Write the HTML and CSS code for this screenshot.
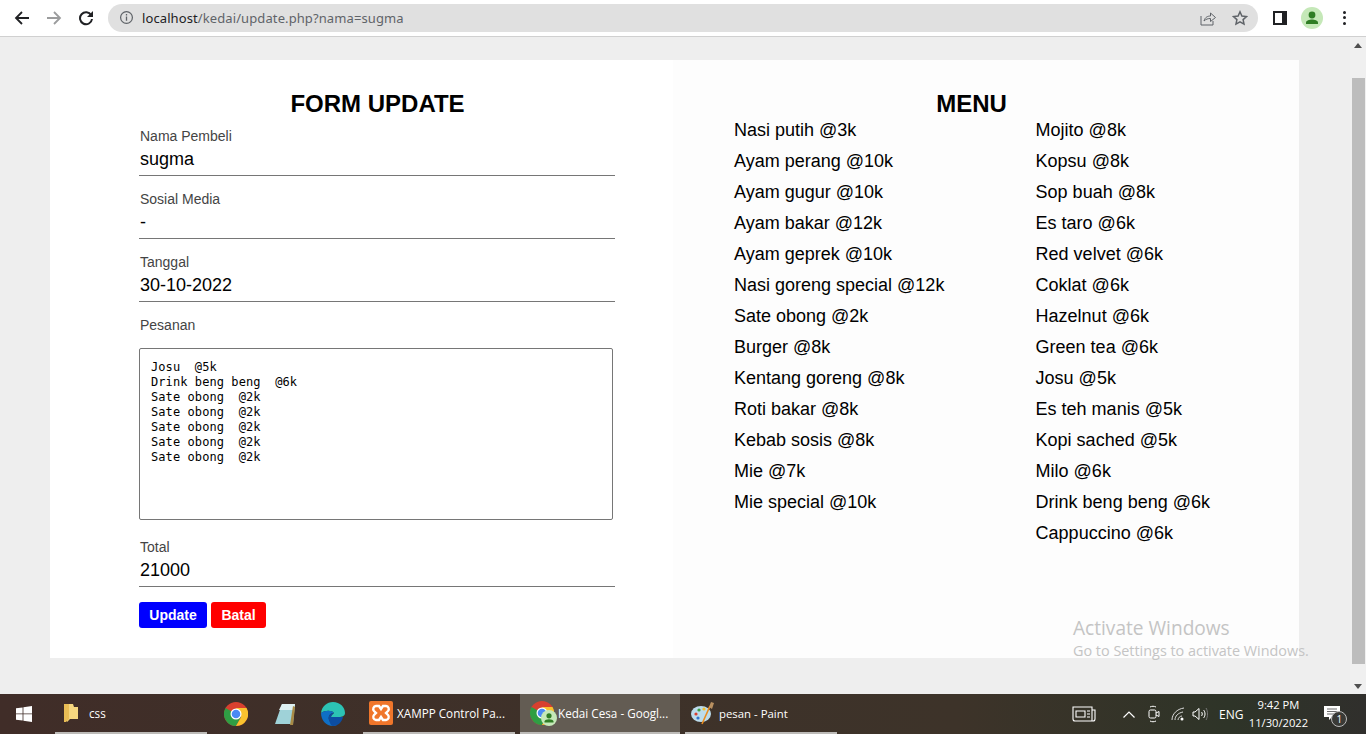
FILE: index.html
```html
<!DOCTYPE html>
<html lang="id">
<head>
<meta charset="utf-8">
<title>Kedai Cesa</title>
<link rel="stylesheet" href="styles.css">
</head>
<body>
<header class="toolbar">
  <svg class="nav-icon" viewBox="0 0 16 16"><path d="M15 8H2.500M8 2 2 8l6 6" fill="none" stroke="#202124" stroke-width="1.800"/></svg>
  <svg class="nav-icon dim" viewBox="0 0 16 16"><path d="M1 8h12.500M8 2l6 6-6 6" fill="none" stroke="#9b9c9d" stroke-width="1.800"/></svg>
  <svg class="nav-icon" viewBox="0 0 16 16"><path d="M13.200 5.200A6 6 0 1 0 14 9" fill="none" stroke="#202124" stroke-width="2"/><path d="M15 1v6H9z" fill="#202124"/></svg>
  <div class="omnibox">
    <svg class="info" viewBox="0 0 16 16"><circle cx="8" cy="8" r="6.300" fill="none" stroke="#5f6368" stroke-width="1.300"/><path d="M8 7v4.500M8 4.300v1.500" stroke="#5f6368" stroke-width="1.400"/></svg>
    <span class="url"><span class="host">localhost</span>/kedai/update.php?nama=sugma</span>
    <svg class="box-icon" viewBox="0 0 16 16"><path d="M1 6v9h12v-4" fill="none" stroke="#5f6368" stroke-width="1"/><path d="M4 11c1-4 4-5 6.500-5V3l5 4.500-5 4V8.500C8 8.500 6 9 4 11z" fill="none" stroke="#5f6368" stroke-width="1"/></svg>
    <svg class="box-icon star" viewBox="0 0 16 16"><path d="m8 1.800 1.900 4.200 4.600.5-3.400 3.100.9 4.500L8 11.800l-4 2.300.9-4.500L1.500 6.500l4.600-.5z" fill="none" stroke="#5f6368" stroke-width="1.500"/></svg>
  </div>
  <svg class="side-icon" viewBox="0 0 14 14"><rect width="14" height="14" fill="#202124"/><rect x="2" y="2" width="7" height="10" fill="#fff"/></svg>
  <div class="avatar">
    <svg viewBox="0 0 22 22"><circle cx="11" cy="8" r="3.400" fill="#2f7d24"/><path d="M5 17v-1.500c0-2 3.500-3 6-3s6 1 6 3V17z" fill="#2f7d24"/></svg>
  </div>
  <div class="dots"><i></i><i></i><i></i></div>
</header>

<div class="viewport">
  <main class="page">
    <div class="card">
      <section class="form-side">
        <form class="form">
          <h1 class="title">FORM UPDATE</h1>
          <label class="field"><span class="label">Nama Pembeli</span><input class="input" value="sugma" readonly></label>
          <label class="field"><span class="label">Sosial Media</span><input class="input" value="-" readonly></label>
          <label class="field"><span class="label">Tanggal</span><input class="input" value="30-10-2022" readonly></label>
          <label class="field area-field"><span class="label">Pesanan</span>
<textarea class="area" readonly>Josu  @5k
Drink beng beng  @6k
Sate obong  @2k
Sate obong  @2k
Sate obong  @2k
Sate obong  @2k
Sate obong  @2k</textarea></label>
          <label class="field"><span class="label">Total</span><input class="input" value="21000" readonly></label>
          <div class="actions"><button type="button" class="btn blue">Update</button><button type="button" class="btn red">Batal</button></div>
        </form>
      </section>
      <section class="menu-side">
        <h2 class="title">MENU</h2>
        <div class="menu-cols">
          <ul class="menu-list">
            <li>Nasi putih @3k</li><li>Ayam perang @10k</li><li>Ayam gugur @10k</li><li>Ayam bakar @12k</li><li>Ayam geprek @10k</li><li>Nasi goreng special @12k</li><li>Sate obong @2k</li><li>Burger @8k</li><li>Kentang goreng @8k</li><li>Roti bakar @8k</li><li>Kebab sosis @8k</li><li>Mie @7k</li><li>Mie special @10k</li>
          </ul>
          <ul class="menu-list">
            <li>Mojito @8k</li><li>Kopsu @8k</li><li>Sop buah @8k</li><li>Es taro @6k</li><li>Red velvet @6k</li><li>Coklat @6k</li><li>Hazelnut @6k</li><li>Green tea @6k</li><li>Josu @5k</li><li>Es teh manis @5k</li><li>Kopi sached @5k</li><li>Milo @6k</li><li>Drink beng beng @6k</li><li>Cappuccino @6k</li>
          </ul>
        </div>
      </section>
    </div>
  </main>
  <div class="scrollbar">
    <svg class="arrow" viewBox="0 0 8 5"><path d="M0 5 4 0l4 5z" fill="#505050"/></svg>
    <div class="thumb"></div>
    <svg class="arrow" viewBox="0 0 8 5"><path d="M0 0l4 5 4-5z" fill="#505050"/></svg>
  </div>
  <div class="watermark">
    <div class="wm-big">Activate Windows</div>
    <div class="wm-small">Go to Settings to activate Windows.</div>
  </div>
</div>

<footer class="taskbar">
  <svg class="start" viewBox="0 0 16 16"><path d="M0 2.300 6.600 1.400V7.500H0zM7.400 1.300 16 0v7.500H7.400zM0 8.300h6.600v6.200L0 13.700zM7.400 8.300H16V16l-8.600-1.200z" fill="#fff"/></svg>
  <div class="task task-css">
    <svg class="folder" viewBox="0 0 14 20"><path d="M3 1h6l1 3h4v12H6l-3 3z" fill="#f6d77f"/><path d="M0 1h5v15l-3 3H0z" fill="#e9bd55"/></svg>
    <span>css</span>
  </div>
  <div class="pinned">
    <svg class="pin" viewBox="0 0 24 24"><circle cx="12" cy="12" r="12" fill="#d8402f"/><path d="M12 12 1.600 6A12 12 0 0 0 12 24l5-9z" fill="#2f9e44"/><path d="M12 6h10.500A12 12 0 0 1 12 24l5.200-9z" fill="#f9c22e"/><circle cx="12" cy="12" r="5.500" fill="#fff"/><circle cx="12" cy="12" r="4.300" fill="#4a8af4"/></svg>
    <svg class="pin" viewBox="0 0 24 24"><path d="M9 2h13l-2 20H2z" fill="#9fd2d8"/><path d="M9 2h13l-1 6H6z" fill="#dff1f2"/><path d="M20 4l2 1-2 18-3 0z" fill="#a88a45"/></svg>
    <svg class="pin" viewBox="0 0 24 24"><path d="M0 11C1 4 6 0 12 0c7 0 12 5 12 11 0 3-3 4-6 4H10c0-2 2-3 3-4-2-3-9-3-13 0z" fill="#2cc3b4"/><path d="M0 11c4-3 11-3 13 0-4 0-6 3-5 7 1 3 4 5 8 6-1 0-3 0-4 0C5 24 0 18 0 11z" fill="#0f6fc6"/><path d="M8 18c-1-4 1-7 5-7-1 1-3 2-3 4h12c-1 5-5 9-10 9-2 0-3-3-4-6z" fill="#0c4da2"/></svg>
  </div>
  <div class="task task-xampp">
    <svg class="task-icon xampp" viewBox="0 0 24 24"><rect width="24" height="24" rx="2" fill="#f0762b"/><path d="M7 5h3l2 3 2-3h3a3 3 0 0 1 2 5l-2 2 2 2a3 3 0 0 1-2 5h-3l-2-3-2 3H7a3 3 0 0 1-2-5l2-2-2-2a3 3 0 0 1 2-5z" fill="none" stroke="#fff" stroke-width="2.400"/></svg>
    <span>XAMPP Control Pa...</span>
  </div>
  <div class="task task-active">
    <div class="chrome-wrap">
      <svg class="task-icon" viewBox="0 0 24 24"><circle cx="12" cy="12" r="12" fill="#d8402f"/><path d="M12 12 1.600 6A12 12 0 0 0 12 24l5-9z" fill="#2f9e44"/><path d="M12 6h10.500A12 12 0 0 1 12 24l5.200-9z" fill="#f9c22e"/><circle cx="12" cy="12" r="5.500" fill="#fff"/><circle cx="12" cy="12" r="4.300" fill="#4a8af4"/></svg>
      <svg class="badge" viewBox="0 0 16 16"><circle cx="8" cy="8" r="8" fill="#c5e8b8"/><circle cx="8" cy="5.800" r="2.600" fill="#2f7d24"/><path d="M3.500 12.500v-1c0-1.500 2.500-2.300 4.500-2.300s4.500.8 4.500 2.300v1z" fill="#2f7d24"/></svg>
    </div>
    <span>Kedai Cesa - Googl...</span>
  </div>
  <div class="task task-paint">
    <svg class="task-icon" viewBox="0 0 24 24"><ellipse cx="10" cy="13" rx="10" ry="8" fill="#bcdcec"/><circle cx="5" cy="13" r="1.600" fill="#d8402f"/><circle cx="8" cy="9" r="1.600" fill="#3f9e44"/><circle cx="13" cy="8" r="1.600" fill="#f5c12e"/><circle cx="7" cy="17" r="1.600" fill="#3377cc"/><path d="M11 23 19 5" stroke="#e98c1f" stroke-width="1.600"/><path d="M18 6l2-5 3 1-2 6z" fill="#b99060"/></svg>
    <span>pesan - Paint</span>
  </div>
  <div class="tray">
    <svg class="news" viewBox="0 0 24 16"><path d="M1 1h19v14H3a2 2 0 0 1-2-2zM20 4h3v9a2 2 0 0 1-2 2h-1M4 5h9v6H4zM15 5h3M15 8h3M15 11h3" fill="none" stroke="#fff" stroke-width="1.100"/></svg>
    <svg class="chev" viewBox="0 0 12 7"><path d="M.5 6.500 6 1l5.500 5.500" fill="none" stroke="#fff" stroke-width="1.200"/></svg>
    <svg class="tray-icon cam" viewBox="0 0 12 18"><rect x="1" y="5" width="7" height="8" rx="1.500" fill="none" stroke="#fff"/><path d="M8 8l3-1.500v5L8 10M2 2c2-1 4-1 6 0M2 16c2 1 4 1 6 0" fill="none" stroke="#fff"/></svg>
    <svg class="tray-icon wifi" viewBox="0 0 14 14"><path d="M1 13C1 7 6 2 13 1M4 13c0-4 3-7 8-8M7 13c0-2 2-4 4-4" fill="none" stroke="#ddd" stroke-width="1"/><circle cx="11" cy="12" r="1.500" fill="#fff"/></svg>
    <svg class="tray-icon vol" viewBox="0 0 16 14"><path d="M1 5h2l4-3.500v11L3 9H1zM9.500 5c1 1 1 3 0 4M11.500 3c2 2 2 6 0 8" fill="none" stroke="#fff"/><path d="M14 1c2 3 2 9 0 12" fill="none" stroke="#777"/></svg>
    <span class="lang">ENG</span>
    <div class="clock"><div>9:42 PM</div><div>11/30/2022</div></div>
    <div class="notif">
      <svg viewBox="0 0 16 14"><path d="M0 0h16v11H8l-3 3v-3H0z" fill="#fff"/><path d="M3 3h10M3 5.500h10M3 8h7" stroke="#444" stroke-width=".8"/></svg>
      <span class="notif-count">1</span>
    </div>
  </div>
</footer>
</body>
</html>
```
FILE: styles.css
```css
* { box-sizing: border-box; }
html, body { height: 100%; }
body {
  margin: 0;
  height: 734px;
  overflow: hidden;
  display: flex;
  flex-direction: column;
  font-family: "Liberation Sans", Arial, sans-serif;
  background: #eeeeee;
}

/* Browser toolbar */
.toolbar {
  height: 37px;
  flex: none;
  display: flex;
  align-items: center;
  background: #fff;
  border-bottom: 1px solid #d0d0d0;
  padding: 0 0 1px 14px;
}
.nav-icon { width: 16px; height: 16px; margin-right: 16px; }
.nav-icon:nth-of-type(3) { margin-right: 14px; }
.omnibox {
  width: 1150px;
  height: 28px;
  border-radius: 14px;
  background: #e0e0e0;
  display: flex;
  align-items: center;
  padding: 0 10px 0 11px;
}
.info { width: 15px; height: 15px; margin-right: 8px; }
.url { font-family: "Noto Sans", "Open Sans", sans-serif; font-size: 13px; color: #5f6368; flex: 1; letter-spacing: .1px; }
.host { color: #202124; }
.box-icon { width: 16px; height: 16px; }
.star { margin-left: 16px; }
.side-icon { width: 14px; height: 14px; margin-left: 15px; }
.avatar {
  width: 22px; height: 22px; border-radius: 50%;
  background: #c5e8b8; margin-left: 14px;
}
.avatar svg { display: block; width: 22px; height: 22px; }
.dots { display: flex; flex-direction: column; gap: 2.500px; margin-left: 20px; }
.dots i { width: 3px; height: 3px; border-radius: 50%; background: #202124; display: block; }

/* Page viewport */
.viewport { flex: 1; min-height: 0; display: flex; position: relative; }
.page { flex: 1; min-width: 0; padding: 23px 51px 0 50px; }
.card { display: flex; height: 598px; background: #fff; }
.form-side { width: 623px; flex: none; padding: 32px 58px 0 89px; background: #fff; }
.menu-side { flex: 1; min-width: 0; background: #fdfdfd; padding: 32px 0 0 61px; }
.title {
  margin: 0;
  font-size: 24px;
  line-height: 24px;
  font-weight: 700;
  text-align: center;
  color: #000;
}
.form .title { margin-bottom: 12px; padding-left: 1px; }
.menu-side .title { width: 475px; }

.field { display: block; height: 63px; }
.label { display: block; font-size: 14px; line-height: 16px; color: #444; padding-left: 1px; }
.input {
  display: block;
  width: 100%;
  height: 32px;
  margin: 0;
  padding: 0 1px 1px 1px;
  border: 0;
  border-bottom: 1px solid #767676;
  border-radius: 0;
  outline: none;
  background: transparent;
  font-family: "Liberation Sans", Arial, sans-serif;
  font-size: 18px;
  color: #000;
}
.area-field { height: 222px; }
.area {
  display: block;
  width: 474px;
  height: 172px;
  margin-top: 15px;
  padding: 11px 11px;
  border: 1px solid #767676;
  border-radius: 2px;
  resize: none;
  overflow: hidden;
  outline: none;
  font-family: "DejaVu Sans Mono", monospace;
  font-size: 12px;
  line-height: 15px;
  letter-spacing: .08px;
  color: #000;
  background: #fff;
}
.actions { display: flex; gap: 4px; }
.btn {
  height: 26px;
  padding: 0 10.500px;
  border: 0;
  border-radius: 3px;
  font-family: "Liberation Sans", Arial, sans-serif;
  font-size: 14px;
  font-weight: 700;
  color: #fff;
}
.blue { background: #0000ff; width: 68px; padding: 0; }
.red { background: #ff0000; width: 55px; padding: 0; }

.menu-cols { display: flex; margin-top: -1px; }
.menu-list {
  list-style: none;
  margin: 0;
  padding: 0;
  width: 301.600px;
  flex: none;
  font-size: 18px;
  line-height: 31px;
  color: #000;
}

/* Scrollbar */
.scrollbar {
  flex: none;
  width: 16px;
  display: flex;
  flex-direction: column;
  align-items: center;
  background: #f0f0f0;
  padding: 6px 0;
}
.arrow { width: 8px; height: 5px; flex: none; }
.thumb { width: 13px; height: 586px; background: #bdbdbd; margin: 30px 0 20px; flex: none; }

.watermark {
  position: absolute;
  left: 1073px;
  top: 578px;
  color: #c4c4c4;
  font-family: "Open Sans", "Noto Sans", sans-serif;
  white-space: nowrap;
}
.wm-big { font-size: 19.100px; line-height: 26px; }
.wm-small { font-size: 14.400px; line-height: 20px; }

/* Taskbar */
.taskbar {
  height: 40px;
  flex: none;
  display: flex;
  align-items: center;
  background: linear-gradient(90deg, #402d28 0%, #3e3129 40%, #3d3329 70%, #2e3428 90%, #302f2c 100%);
  color: #fff;
  font-family: "Open Sans", "Noto Sans", sans-serif;
  font-size: 11.700px;
}
.start { width: 16px; height: 16px; margin: 0 23px 0 16px; flex: none; }
.task {
  height: 40px;
  display: flex;
  align-items: center;
  border-bottom: 2px solid #bdbbb8;
  flex: none;
  white-space: nowrap;
}
.task-css { width: 152px; padding-left: 9px; gap: 11px; margin-right: 5px; }
.folder { width: 14px; height: 20px; flex: none; }
.pinned { width: 151px; display: flex; align-items: center; padding-left: 12px; flex: none; }
.pin { width: 24px; height: 24px; margin-right: 24.500px; flex: none; }
.task-icon { width: 24px; height: 24px; flex: none; }
.task-xampp { width: 152px; gap: 4px; padding-left: 6px; margin-right: 5px; }
.task-active { width: 160px; padding-left: 10px; gap: 2px; margin-right: 5px; background: #635c53; }
.task-paint { width: 152px; padding-left: 6px; gap: 4px; font-size: 11.400px; }
.chrome-wrap { position: relative; width: 26px; height: 24px; }
.badge { position: absolute; left: 11px; top: 9px; width: 16px; height: 16px; }
.tray { flex: 1; display: flex; align-items: center; height: 40px; padding-left: 235px; }
.news { width: 24px; height: 16px; margin-right: 27px; flex: none; }
.chev { width: 12px; height: 7px; margin-right: 13px; flex: none; }
.tray-icon { flex: none; }
.cam { width: 12px; height: 18px; margin-right: 11px; }
.wifi { width: 14px; height: 14px; margin-right: 7px; }
.vol { width: 16px; height: 14px; margin-right: 11px; }
.lang { font-size: 12px; margin-right: 5px; }
.clock { font-size: 11.200px; line-height: 18px; text-align: center; width: 60px; margin-right: 16px; }
.notif { position: relative; width: 18px; height: 16px; }
.notif svg { display: block; width: 16px; height: 14px; }
.notif-count {
  position: absolute; left: 7px; top: 5px; width: 16px; height: 16px;
  border-radius: 50%; background: #3a3a36; border: 1px solid #bbb;
  font-size: 10px; line-height: 14px; text-align: center;
}
```
